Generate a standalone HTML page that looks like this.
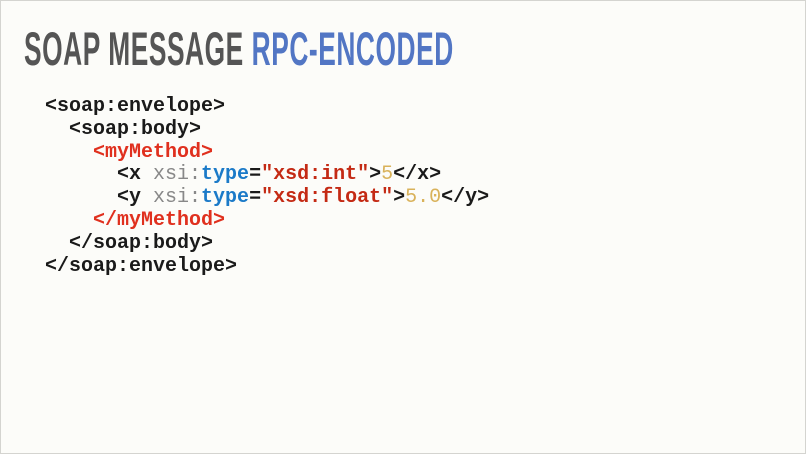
<!DOCTYPE html>
<html><head><style>
html,body{margin:0;padding:0}
body{width:806px;height:454px;background:#fcfcf9;position:relative;overflow:hidden;box-sizing:border-box;border:1px solid #d4d4d0}
.t{position:absolute;left:23px;top:20px;font-family:"Liberation Sans",sans-serif;font-weight:bold;font-size:47px;line-height:56px;color:#555;white-space:nowrap;transform:scaleX(0.56);transform-origin:0 0;letter-spacing:1px}
.t span{color:#5276c4}
pre{position:absolute;left:44px;top:95px;margin:0;font-family:"Liberation Mono",monospace;font-weight:bold;font-size:20px;line-height:22.8px;color:#1a1a1a}
.r{color:#e0301e}.g{color:#888;font-weight:normal}.b{color:#1b7ac8}.s{color:#c42a14}.y{color:#d9b25a;font-weight:normal}
</style></head><body>
<div class="t">SOAP MESSAGE <span>RPC-ENCODED</span></div>
<pre>&lt;soap:envelope&gt;
  &lt;soap:body&gt;
    <span class="r">&lt;myMethod&gt;</span>
      &lt;x <span class="g">xsi:</span><span class="b">type</span>=<span class="s">"xsd:int"</span>&gt;<span class="y">5</span>&lt;/x&gt;
      &lt;y <span class="g">xsi:</span><span class="b">type</span>=<span class="s">"xsd:float"</span>&gt;<span class="y">5.0</span>&lt;/y&gt;
    <span class="r">&lt;/myMethod&gt;</span>
  &lt;/soap:body&gt;
&lt;/soap:envelope&gt;</pre>
</body></html>
